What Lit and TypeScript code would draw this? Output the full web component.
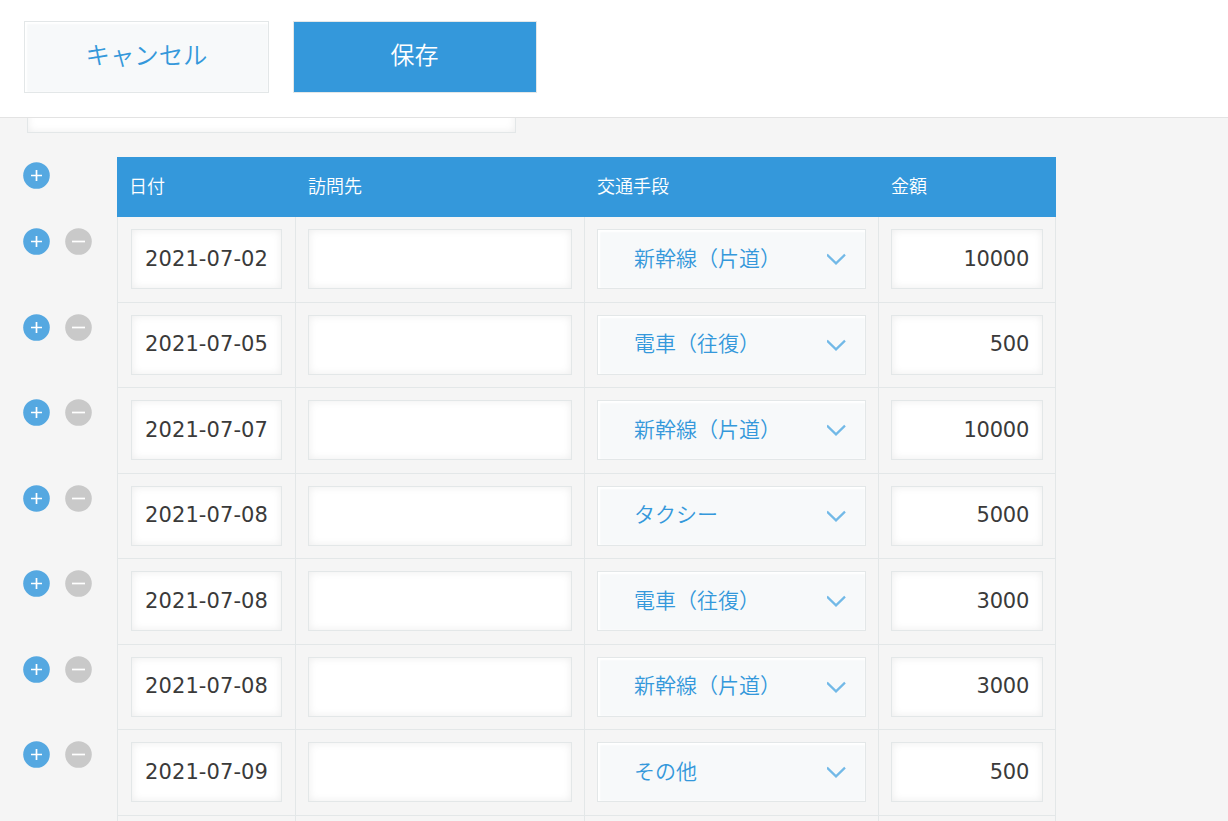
import { LitElement, html, css } from "lit";
import { customElement, property } from "lit/decorators.js";

interface Expense {
  date: string;
  transport: string;
  amount: string;
}

const ROWS: Expense[] = [
  { date: "2021-07-02", transport: "新幹線（片道）", amount: "10000" },
  { date: "2021-07-05", transport: "電車（往復）", amount: "500" },
  { date: "2021-07-07", transport: "新幹線（片道）", amount: "10000" },
  { date: "2021-07-08", transport: "タクシー", amount: "5000" },
  { date: "2021-07-08", transport: "電車（往復）", amount: "3000" },
  { date: "2021-07-08", transport: "新幹線（片道）", amount: "3000" },
  { date: "2021-07-09", transport: "その他", amount: "500" },
];

@customElement("round-button")
export class RoundButton extends LitElement {
  @property() kind: "add" | "remove" = "add";

  static styles = css`
    :host {
      display: block;
      width: 27px;
      height: 27px;
    }
    svg {
      display: block;
    }
    .add {
      fill: #55a8e1;
    }
    .remove {
      fill: #c9c9c9;
    }
    .sign {
      fill: none;
      stroke: #fff;
      stroke-width: 1.7;
    }
  `;

  render() {
    const add = this.kind === "add";
    return html`<svg width="27" height="27" viewBox="0 0 27 27">
      <circle class=${this.kind} cx="13.5" cy="13.5" r="13.3" />
      <path class="sign" d=${add ? "M8 13.5H19M13.5 8V19" : "M7 13.5H20"} />
    </svg>`;
  }
}

@customElement("app-root")
export class AppRoot extends LitElement {
  static styles = css`
    :host {
      display: block;
      height: 821px;
      overflow: hidden;
      background: #f5f5f5;
      font-family: "DejaVu Sans", "Noto Sans CJK JP", sans-serif;
      color: #3a3a3a;
    }
    * {
      box-sizing: border-box;
    }
    .toolbar {
      display: flex;
      gap: 24px;
      height: 118px;
      padding: 21px 24px 0;
      background: #fff;
      border-bottom: 1px solid #e3e3e3;
    }
    .button {
      height: 72px;
      border: 1px solid #e3e7e8;
      font: 350 24px/64px "Noto Sans CJK JP", sans-serif;
      text-align: center;
    }
    .cancel {
      width: 245px;
      background: #f7f9fa;
      box-shadow: inset 1px 1px 2px 1px #fff;
      color: #3498db;
      font-size: 24.4px;
    }
    .save {
      width: 244px;
      padding-right: 1px;
      background: #3498db;
      color: #fff;
    }
    .field {
      height: 60px;
      border: 1px solid #e3e7e8;
      background: #fff;
      box-shadow: inset 0 0 9px #ededed;
    }
    .clip {
      height: 39px;
      padding-left: 27px;
      overflow: hidden;
    }
    .clipped {
      width: 489px;
      margin-top: -45px;
    }
    .row {
      display: flex;
      height: 86px;
    }
    .row.short {
      height: 85px;
    }
    .row.head {
      height: 60px;
    }
    .actions {
      display: flex;
      gap: 15px;
      width: 117px;
      padding: 11px 0 0 23px;
    }
    .head .actions {
      padding-top: 5px;
    }
    .cells {
      display: grid;
      grid-template-columns: 179px 289px 294px 177px;
      width: 939px;
    }
    .cell {
      padding: 12px 12px 0;
      border-right: 1px solid #e3e7e8;
      border-bottom: 1px solid #e3e7e8;
    }
    .cell:first-child {
      padding: 12px 13px 0;
      border-left: 1px solid #e3e7e8;
    }
    .head .cells {
      background: #3498db;
      color: #fff;
      font: 350 18px/56px "Noto Sans CJK JP", sans-serif;
    }
    .title {
      padding-left: 12px;
    }
    .date,
    .amount {
      padding: 0 13px;
      font-size: 21px;
      line-height: 59px;
      white-space: nowrap;
    }
    .date {
      letter-spacing: 0.1px;
    }
    .amount {
      text-align: right;
      letter-spacing: -0.25px;
    }
    .select {
      display: flex;
      justify-content: space-between;
      height: 60px;
      padding: 0 19px 0 36px;
      border: 1px solid #e3e7e8;
      background: #f7f9fa;
      box-shadow: inset 1px 1px 2px 1px #fff;
      color: #3498db;
      font: 350 21px/55px "Noto Sans CJK JP", sans-serif;
    }
    .short .date,
    .short .amount {
      line-height: 57px;
    }
    .short .select {
      line-height: 53px;
    }
    .chevron {
      display: block;
      width: 19px;
      height: 13px;
      margin-top: 23px;
      fill: none;
      stroke: #72b9e7;
      stroke-width: 2.2;
    }
  `;

  private renderRow(row: Expense, index: number) {
    return html`<div class="row ${index % 2 ? "short" : ""}">
      <div class="actions">
        <round-button kind="add"></round-button>
        <round-button kind="remove"></round-button>
      </div>
      <div class="cells">
        <div class="cell"><div class="field date">${row.date}</div></div>
        <div class="cell"><div class="field"></div></div>
        <div class="cell">
          <div class="select">
            <span>${row.transport}</span>
            <svg class="chevron" viewBox="0 0 19 13">
              <path d="M0 1.6L9 10.4L18 1.6" />
            </svg>
          </div>
        </div>
        <div class="cell"><div class="field amount">${row.amount}</div></div>
      </div>
    </div>`;
  }

  render() {
    return html`
      <div class="toolbar">
        <div class="button cancel">キャンセル</div>
        <div class="button save">保存</div>
      </div>
      <div class="clip"><div class="field clipped"></div></div>
      <div class="row head">
        <div class="actions"><round-button kind="add"></round-button></div>
        <div class="cells">
          ${["日付", "訪問先", "交通手段", "金額"].map(
            (title) => html`<div class="title">${title}</div>`
          )}
        </div>
      </div>
      ${ROWS.map((row, index) => this.renderRow(row, index))}
      <div class="row">
        <div class="actions"></div>
        <div class="cells">
          ${[0, 1, 2, 3].map(() => html`<div class="cell"></div>`)}
        </div>
      </div>
    `;
  }
}
